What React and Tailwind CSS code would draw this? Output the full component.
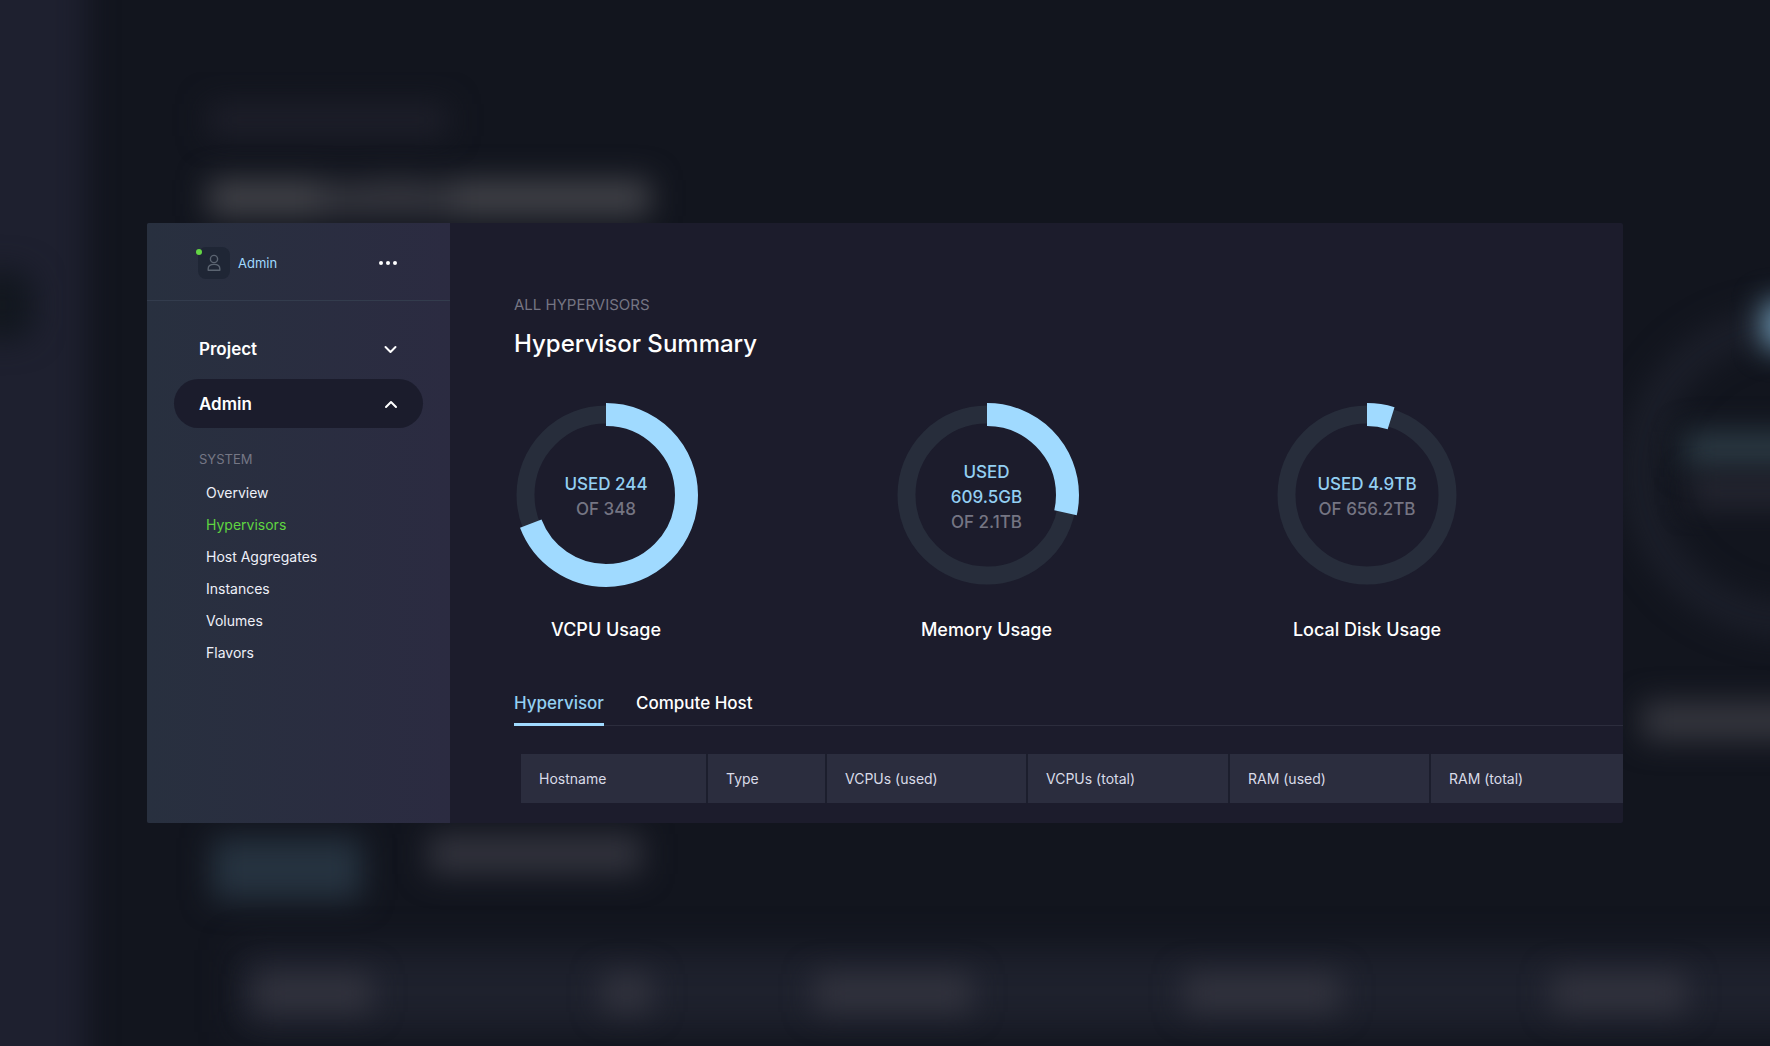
import React from "react";

const gauges = [
  { title: "VCPU Usage", used: "USED 244", total: "OF 348", share: 0.691 },
  { title: "Memory Usage", used: "USED 609.5GB", total: "OF 2.1TB", share: 0.285 },
  { title: "Local Disk Usage", used: "USED 4.9TB", total: "OF 656.2TB", share: 0.0485 },
];

const links = ["Overview", "Hypervisors", "Host Aggregates", "Instances", "Volumes", "Flavors"];

const columns = [
  { label: "Hostname", width: "w-[186px]" },
  { label: "Type", width: "w-[119px]" },
  { label: "VCPUs (used)", width: "w-[201px]" },
  { label: "VCPUs (total)", width: "w-[202px]" },
  { label: "RAM (used)", width: "w-[201px]" },
  { label: "RAM (total)", width: "w-auto" },
];

/* Out-of-focus, enlarged dashboard shapes behind the panel */
function Backdrop() {
  return (
    <svg
      aria-hidden="true"
      className="absolute inset-0 -z-10 h-full w-full"
      viewBox="0 0 1770 1046"
      preserveAspectRatio="xMidYMid slice"
    >
      <defs>
        <filter id="soft" x="-50%" y="-100%" width="200%" height="300%" colorInterpolationFilters="sRGB">
          <feGaussianBlur stdDeviation="15" />
        </filter>
        <filter id="softer" x="-50%" y="-100%" width="200%" height="300%" colorInterpolationFilters="sRGB">
          <feGaussianBlur stdDeviation="18" />
        </filter>
      </defs>
      <rect width="1770" height="1046" fill="#12151e" />
      <rect x="-60" y="-60" width="146" height="1170" fill="#1e202f" filter="url(#soft)" />
      <rect x="-30" y="270" width="64" height="70" rx="20" fill="#12171f" filter="url(#soft)" />
      <rect x="208" y="104" width="240" height="32" fill="#1e1f2a" filter="url(#soft)" />
      <g fill="#424349" filter="url(#soft)">
        <rect x="208" y="180" width="112" height="36" />
        <rect x="372" y="180" width="50" height="36" />
        <rect x="454" y="180" width="196" height="36" />
        <rect x="320" y="182" width="134" height="34" fill="#35363e" />
      </g>
      <rect x="212" y="838" width="150" height="62" fill="#263340" filter="url(#soft)" />
      <rect x="428" y="834" width="214" height="40" fill="#32333d" filter="url(#soft)" />
      <rect x="238" y="950" width="1600" height="82" fill="#1e212d" filter="url(#softer)" />
      <g fill="#32333e" filter="url(#soft)">
        <rect x="254" y="974" width="118" height="38" />
        <rect x="602" y="974" width="50" height="38" />
        <rect x="814" y="974" width="158" height="38" />
        <rect x="1184" y="974" width="156" height="38" />
        <rect x="1552" y="974" width="134" height="38" />
      </g>
      <circle cx="1787" cy="472" r="148" fill="none" stroke="#1c1f2a" strokeWidth="32" filter="url(#soft)" />
      <rect x="1764" y="302" width="70" height="46" fill="#6f9cb7" filter="url(#soft)" />
      <rect x="1684" y="432" width="140" height="36" fill="#2c3b45" filter="url(#soft)" />
      <rect x="1690" y="476" width="140" height="30" fill="#262732" filter="url(#soft)" />
      <rect x="1642" y="702" width="190" height="38" fill="#36373f" filter="url(#soft)" />
    </svg>
  );
}

function Chevron({ up }) {
  return (
    <svg aria-hidden="true" width="14" height="10" viewBox="0 0 14 10" fill="none" stroke="#fff" strokeWidth="2" strokeLinecap="round" strokeLinejoin="round">
      <path d={up ? "M2 7l5-5 5 5" : "M1.500 2l5 5 5-5"} />
    </svg>
  );
}

function Sidebar() {
  return (
    <aside className="w-[303px] shrink-0 bg-linear-to-r from-[#28303f] to-[#2b2b41]">
      <div className="flex h-[78px] items-center border-b border-[#333c4d] pt-0.5 pr-[53px] pl-[51px]">
        <div className="relative flex size-8 items-center justify-center rounded-lg bg-[#1f2635]">
          <span className="absolute top-0.5 -left-0.5 size-1.5 rounded-full bg-[#64d645]" />
          <svg aria-hidden="true" width="14" height="18" viewBox="0 0 14 18" fill="none" stroke="#5b6471" strokeWidth="1.4">
            <circle cx="7" cy="5" r="3.6" />
            <path d="M1.200 16.200v-1.400C1.200 12 3.600 10.400 7 10.400s5.800 1.600 5.800 4.400v1.400z" strokeLinejoin="round" />
          </svg>
        </div>
        <span className="pt-0.5 pl-2 text-[13px] text-[#a0daff]">Admin</span>
        <button type="button" aria-label="Account menu" className="ml-auto cursor-pointer">
          <svg aria-hidden="true" width="18" height="4" viewBox="0 0 18 4" fill="#fff">
            <circle cx="2" cy="2" r="2" />
            <circle cx="9" cy="2" r="2" />
            <circle cx="16" cy="2" r="2" />
          </svg>
        </button>
      </div>
      <nav className="px-[27px] pt-[23px]">
        <div className="flex flex-col gap-1.5">
          <button type="button" className="flex h-[49px] items-center justify-between rounded-full px-[25px] pt-0.5 text-[17px] font-semibold">
            Project
            <Chevron />
          </button>
          <button type="button" aria-expanded="true" className="flex h-[49px] items-center justify-between rounded-full bg-[#1b1c2c] px-[25px] pt-0.5 text-[17px] font-semibold">
            Admin
            <Chevron up />
          </button>
        </div>
        <h2 className="mt-[19px] pl-[25px] text-[13px] leading-6 text-[#757785]">SYSTEM</h2>
        <ul className="mt-1.5 pl-8">
          {links.map((l) => (
            <li key={l}>
              <a
                href="#"
                className={l === "Hypervisors" ? "block text-sm leading-8 text-[#5fd641]" : "block text-sm leading-8 text-[#eef0f8]"}
              >
                {l}
              </a>
            </li>
          ))}
        </ul>
      </nav>
    </aside>
  );
}

function Gauge({ title, used, total, share }) {
  const r = 80.5;
  const c = 2 * Math.PI * r;
  return (
    <figure className="flex w-[184px] flex-col items-center">
      <div className="grid size-[184px] place-items-center">
        <svg aria-hidden="true" className="col-start-1 row-start-1" width="184" height="184" viewBox="0 0 184 184" fill="none">
          <circle cx="92" cy="92" r={r} stroke="#272d3b" strokeWidth="18" />
          <circle cx="92" cy="92" r={r} stroke="#a0daff" strokeWidth="23" strokeDasharray={`${c * share} ${c}`} transform="rotate(-90 92 92)" />
        </svg>
        <p className="col-start-1 row-start-1 w-[104px] pt-1 text-center text-[17px] leading-[25px] font-medium text-[#757583]">
          <span className="block text-[#93cff2]">{used}</span>
          {total}
        </p>
      </div>
      <figcaption className="mt-[29px] text-lg leading-7 font-medium whitespace-nowrap">{title}</figcaption>
    </figure>
  );
}

export default function App() {
  return (
    <div className="relative isolate flex min-h-screen items-center overflow-hidden bg-[#12151e] px-[147px] font-['Inter','Liberation_Sans',sans-serif] text-white">
      <Backdrop />
      <div className="flex w-full overflow-hidden rounded-xs bg-[#1c1c2c]">
        <Sidebar />
        <main className="min-w-0 flex-1 pt-[70px] pb-5 pl-16">
          <p className="text-[15px] leading-6 text-[#757583]">ALL HYPERVISORS</p>
          <h1 className="mt-[9px] text-2xl leading-9 font-medium">Hypervisor Summary</h1>
          <div className="mt-[41px] flex justify-between pr-[164px]">
            {gauges.map((g) => (
              <Gauge key={g.title} {...g} />
            ))}
          </div>
          <div role="tablist" className="mt-[35px] flex gap-8 border-b border-[#2c2d3d] text-[17px] leading-6 font-medium">
            <button type="button" role="tab" aria-selected="true" className="-mb-px border-b-3 border-[#a0daff] pt-3 pb-2 text-[#93cff2]">
              Hypervisor
            </button>
            <button type="button" role="tab" aria-selected="false" className="-mb-px border-b-3 border-transparent pt-3 pb-2">
              Compute Host
            </button>
          </div>
          <div className="mt-7 pl-[7px]">
            <table className="w-full table-fixed border-collapse">
              <thead>
                <tr>
                  {columns.map((c) => (
                    <th
                      key={c.label}
                      scope="col"
                      className={`${c.width} h-[49px] border-r-2 border-[#1c1e2d] bg-[#2b2d3e] px-[18px] text-left text-sm font-normal text-[#d9dbe8] last:border-r-0`}
                    >
                      {c.label}
                    </th>
                  ))}
                </tr>
              </thead>
            </table>
          </div>
        </main>
      </div>
    </div>
  );
}
